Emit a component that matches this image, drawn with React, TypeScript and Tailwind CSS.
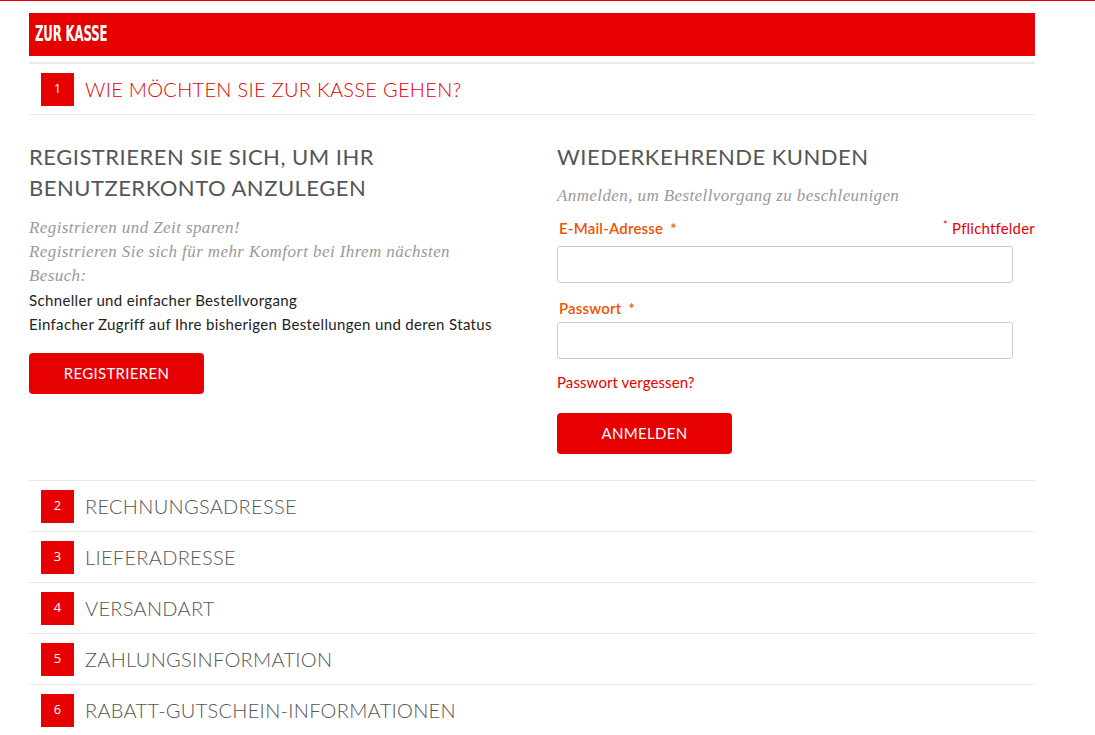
function StepRow({ n, title, active }: { n: number; title: string; active?: boolean }) {
  return (
    <div className="flex items-center h-[51px] border-b border-[#e8e8e8] pl-3">
      <div className="w-[33px] h-[33px] bg-[#e60000] text-white text-[13px] flex items-center justify-center font-['Open_Sans',sans-serif]">
        {n}
      </div>
      <div
        className={
          "ml-[11px] text-[20px] tracking-[0.3px] font-light " +
          (active ? "text-[#e60000]" : "text-[#555]")
        }
      >
        {title}
      </div>
    </div>
  );
}

export default function App() {
  return (
    <div className="min-h-[735px] bg-white border-t border-[#e60000] font-['Lato',sans-serif]">
      <div className="ml-[29px] w-[1006px] pt-[12px]">
        <div className="h-[43px] bg-[#e60000] flex items-center pl-[6px] border-b-[6px] border-white box-content">
          <span className="inline-block origin-left scale-x-[0.56] text-white font-bold text-[21px] tracking-[-0.3px] font-['DejaVu_Sans',sans-serif]">
            ZUR KASSE
          </span>
        </div>
        <div className="border-t-2 border-[#ececec]">
          <StepRow n={1} title="WIE MÖCHTEN SIE ZUR KASSE GEHEN?" active />
        </div>

        <div className="flex pt-[26px] pb-[26px] border-b border-[#e8e8e8]">
          <div className="w-[528px] pr-4">
            <h2 className="text-[22px] leading-[31px] text-[#555] tracking-[0.5px]">
              REGISTRIEREN SIE SICH, UM IHR
              <br />
              BENUTZERKONTO ANZULEGEN
            </h2>
            <div className="mt-[13px] text-[17px] leading-[24px] italic tracking-[0.4px] text-[#999] font-['Liberation_Serif',serif]">
              <p>Registrieren und Zeit sparen!</p>
              <p className="w-[440px]">Registrieren Sie sich für mehr Komfort bei Ihrem nächsten Besuch:</p>
            </div>
            <div className="text-[15px] leading-[24px] tracking-[0.35px] text-[#222]">
              <p>Schneller und einfacher Bestellvorgang</p>
              <p>Einfacher Zugriff auf Ihre bisherigen Bestellungen und deren Status</p>
            </div>
            <button className="mt-[17px] w-[175px] h-[41px] bg-[#e60000] text-white text-[15px] tracking-[0.3px] rounded-[4px]">
              REGISTRIEREN
            </button>
          </div>

          <div className="flex-1">
            <h2 className="text-[22px] leading-[31px] text-[#555] tracking-[0.5px]">WIEDERKEHRENDE KUNDEN</h2>
            <p className="mt-[12px] text-[17px] leading-[24px] italic tracking-[0.4px] text-[#999] font-['Liberation_Serif',serif]">
              Anmelden, um Bestellvorgang zu beschleunigen
            </p>
            <div className="mt-[10px] flex justify-between items-center h-[20px]">
              <label className="ml-[2px] text-[15px] font-semibold tracking-[0.2px] text-[#f25100]">
                E-Mail-Adresse <span className="ml-[3px]">*</span>
              </label>
              <span className="text-[15px] tracking-[0.2px] text-[#e60000]">
                <span className="text-[11px] align-top">*</span> Pflichtfelder
              </span>
            </div>
            <input className="mt-[8px] block w-[456px] h-[37px] border border-[#ccc] rounded-[3px] outline-none px-2" />
            <label className="block mt-[14px] ml-[2px] h-[20px] text-[15px] font-semibold tracking-[0.2px] text-[#f25100]">
              Passwort <span className="ml-[3px]">*</span>
            </label>
            <input
              type="password"
              className="mt-[5px] block w-[456px] h-[37px] border border-[#ccc] rounded-[3px] outline-none px-2"
            />
            <p className="mt-[13px] text-[15px] leading-[20px] tracking-[0.1px] text-[#e60000]">Passwort vergessen?</p>
            <button className="mt-[21px] w-[175px] h-[41px] bg-[#e60000] text-white text-[15px] tracking-[0.3px] rounded-[4px]">
              ANMELDEN
            </button>
          </div>
        </div>

        <StepRow n={2} title="RECHNUNGSADRESSE" />
        <StepRow n={3} title="LIEFERADRESSE" />
        <StepRow n={4} title="VERSANDART" />
        <StepRow n={5} title="ZAHLUNGSINFORMATION" />
        <StepRow n={6} title="RABATT-GUTSCHEIN-INFORMATIONEN" />
      </div>
    </div>
  );
}
